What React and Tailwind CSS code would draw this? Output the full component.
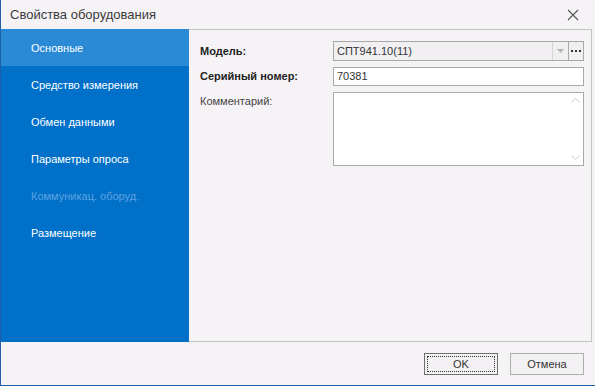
import React from 'react';

const menu = [
  { label: 'Основные', active: true },
  { label: 'Средство измерения' },
  { label: 'Обмен данными' },
  { label: 'Параметры опроса' },
  { label: 'Коммуникац. оборуд.', disabled: true },
  { label: 'Размещение' },
];

const font = { fontFamily: 'Tahoma, "Liberation Sans", Arial, sans-serif' };

export default function App() {
  return (
    <div
      className="w-[595px] h-[386px] bg-[#f6f3f7] border-l border-b border-[#1e5fa8] flex flex-col text-[#222]"
      style={font}
    >
      {/* title bar */}
      <div className="h-[29px] flex items-center justify-between pl-[9px] pr-[16px]">
        <span className="text-[13px] text-[#3a3a3a] pt-px">Свойства оборудования</span>
        <svg width="12" height="12" viewBox="0 0 12 12">
          <path d="M1 1L11 11M11 1L1 11" stroke="#555" strokeWidth="1.1" />
        </svg>
      </div>

      {/* body */}
      <div className="h-[313px] flex border-t border-[#c3c3c3] mr-[3px]">
        <div className="w-[188px] bg-[#0070c8] flex flex-col -mt-px">
          {menu.map((m) => (
            <div
              key={m.label}
              className={
                'h-[37px] flex items-center pl-[30px] pt-[2px] text-[11px] ' +
                (m.active ? 'bg-[#2a8ad6] text-white' : m.disabled ? 'text-[#5fa3e2]' : 'text-white')
              }
            >
              {m.label}
            </div>
          ))}
        </div>
        <div className="flex-1 border-r border-b border-[#c3c3c3] pl-[11px] pr-[7px] pt-[11px]">
          <div className="flex items-center h-[20px]">
            <div className="w-[133px] text-[11px] font-bold text-[#222]">Модель:</div>
            <div className="flex-1 h-[20px] border border-[#a9a9a9] bg-[#f1eff2] flex items-center">
              <span className="flex-1 pl-[3px] text-[11px] text-[#333]">СПТ941.10(11)</span>
              <div className="w-[16px] h-full border-l border-[#d6d6d6] flex items-center justify-center">
                <svg width="7" height="4" viewBox="0 0 7 4"><path d="M0 0H7L3.5 4Z" fill="#b4b4b4" /></svg>
              </div>
              <div className="w-[15px] h-full border-l border-[#a9a9a9] flex items-center justify-center gap-[2px]">
                <span className="w-[2px] h-[2px] bg-[#333]" />
                <span className="w-[2px] h-[2px] bg-[#333]" />
                <span className="w-[2px] h-[2px] bg-[#333]" />
              </div>
            </div>
          </div>
          <div className="flex items-center h-[19px] mt-[6px]">
            <div className="w-[133px] text-[11px] font-bold text-[#222]">Серийный номер:</div>
            <div className="flex-1 h-[19px] border border-[#a9a9a9] bg-white flex items-center pl-[3px] text-[11px] text-[#333]">
              70381
            </div>
          </div>
          <div className="flex mt-[6px]">
            <div className="w-[133px] text-[11px] text-[#444] pt-[1px]">Комментарий:</div>
            <div className="flex-1 h-[74px] border border-[#a9a9a9] bg-white flex justify-end">
              <div className="w-[16px] flex flex-col justify-between items-center py-[5px]">
                <svg width="9" height="5" viewBox="0 0 9 5"><path d="M0.5 4.5L4.5 0.5L8.5 4.5" stroke="#c9c9c9" fill="none" /></svg>
                <svg width="9" height="5" viewBox="0 0 9 5"><path d="M0.5 0.5L4.5 4.5L8.5 0.5" stroke="#c9c9c9" fill="none" /></svg>
              </div>
            </div>
          </div>
        </div>
      </div>

      {/* footer */}
      <div className="flex-1 flex items-start justify-end gap-[12px] pt-[11px] pr-[11px]">
        <button className="w-[74px] h-[22px] border border-[#6f6f6f] bg-[#f3f1f4] flex items-center justify-center p-[2px]">
          <span className="w-full h-full border border-dotted border-[#333] flex items-center justify-center text-[11px] text-[#333]">
            OK
          </span>
        </button>
        <button className="w-[74px] h-[22px] border border-[#adadad] bg-[#f3f1f4] text-[11px] text-[#333]">
          Отмена
        </button>
      </div>
    </div>
  );
}
